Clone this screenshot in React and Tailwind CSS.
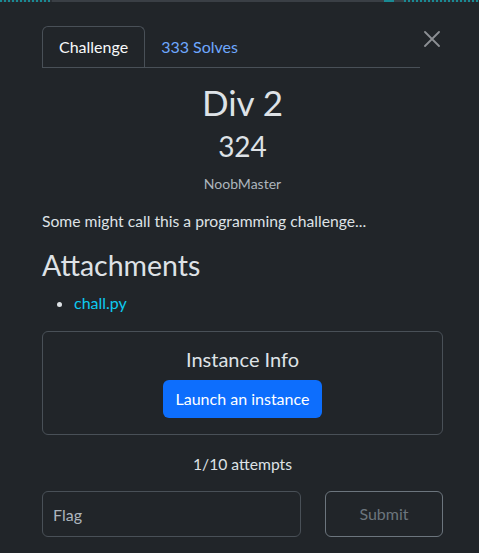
export default function App() {
  return (
    <div className="w-[479px] h-[553px] overflow-hidden bg-[#212529] text-[#dee2e6]" style={{ fontFamily: 'Lato, "Noto Sans", sans-serif' }}>
      {/* bits of the page behind the modal */}
      <div className="flex h-[2px]">
        <div className="w-[52px] bg-[repeating-linear-gradient(90deg,#1a8a94_0_2px,#2b3035_2px_4px)]" />
        <div className="w-[332px] bg-[#3a3f45]" />
        <div className="w-[10px] bg-[#1a8a94]" />
        <div className="w-[10px] bg-[#3a3f45]" />
        <div className="flex-1 bg-[repeating-linear-gradient(90deg,#1a8a94_0_2px,#2b3035_2px_4px)]" />
      </div>

      <div className="pl-[42px] pr-[36px]">
        <div className="flex items-start mt-[24px]">
          <div className="flex w-[378px] shrink-0 border-b border-[#495057]">
            <div className="h-[41px] px-[16px] flex items-center border border-b-0 border-[#495057] rounded-t-[6px] text-[16px] text-[#f8f9fa] -mb-px bg-[#212529]">
              Challenge
            </div>
            <div className="h-[41px] px-[16px] flex items-center text-[16px] text-[#6ea8fe]">333 Solves</div>
          </div>
          <button className="ml-[4px] mt-[5px] text-[#8c8f93]">
            <svg width="16" height="16" viewBox="0 0 16 16" fill="none" stroke="currentColor" strokeWidth="1.8" strokeLinecap="round">
              <path d="M1 1 L15 15 M15 1 L1 15" />
            </svg>
          </button>
        </div>

        <div className="text-center">
          <h2 className="text-[35px] leading-[42px] mt-[13px] text-[#dee2e6]">Div 2</h2>
          <h3 className="text-[28px] leading-[36px] mt-[5px] text-[#dee2e6]">324</h3>
          <div className="text-[14px] leading-[17px] mt-[11px] text-[#adb5bd]">NoobMaster</div>
        </div>

        <p className="text-[15.7px] leading-[19px] mt-[20px] text-[#dee2e6]">Some might call this a programming challenge...</p>

        <h3 className="text-[28.5px] leading-[38px] mt-[15px] text-[#dee2e6]">Attachments</h3>
        <ul className="list-disc pl-[32px] mt-[9px] text-[16px] leading-[19px]">
          <li><a className="text-[#0dcaf0]">chall.py</a></li>
        </ul>

        <div className="mt-[19px] h-[104px] border border-[#495057] rounded-[6px] flex flex-col items-center pt-[15px]">
          <div className="text-[20px] leading-[24px] text-[#dee2e6]">Instance Info</div>
          <button className="mt-[9px] h-[38px] px-[13px] rounded-[6px] bg-[#0d6efd] text-white text-[16px]">Launch an instance</button>
        </div>

        <div className="text-center text-[15.7px] leading-[18px] mt-[20px] text-[#dee2e6]">1/10 attempts</div>

        <div className="flex mt-[18px] gap-[24px]">
          <input placeholder="Flag" className="w-[259px] h-[46px] border border-[#495057] rounded-[6px] bg-transparent px-[10px] text-[16px] placeholder-[#adb5bd] outline-none" />
          <button className="flex-1 h-[46px] border border-[#6c757d] rounded-[6px] text-[16px] text-[#6c757d]">Submit</button>
        </div>
      </div>
    </div>
  );
}
